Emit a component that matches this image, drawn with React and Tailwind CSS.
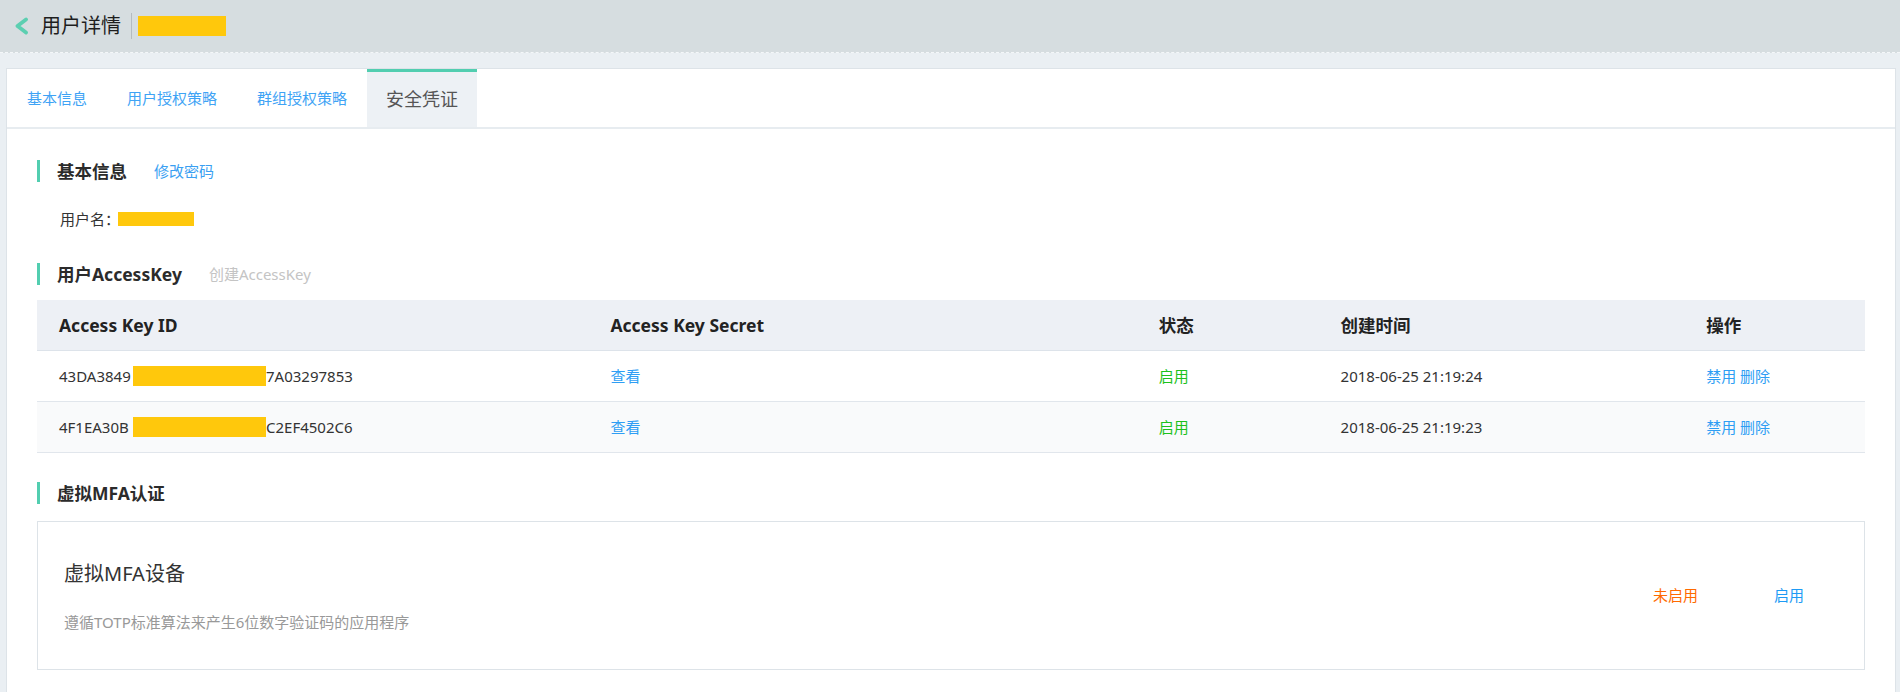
import React from "react";

function SectionTitle({ children, extra, extraClass }) {
  return (
    <div className="flex items-center h-[22px] border-l-[3px] border-[#52ceb0] pl-[17px]">
      <span className="text-[17.5px] font-bold text-[#2b2b2b] leading-[22px]">{children}</span>
      {extra && <span className={"ml-[27px] text-[15px] leading-[22px] " + extraClass}>{extra}</span>}
    </div>
  );
}

const rows = [
  { pre: "43DA3849", post: "7A03297853", time: "2018-06-25 21:19:24", bg: "bg-white" },
  { pre: "4F1EA30B", post: "C2EF4502C6", time: "2018-06-25 21:19:23", bg: "bg-[#f9fafb]" },
];

export default function App() {
  return (
    <div className="min-h-screen bg-[#eaeff3] font-['Noto_Sans','Noto_Sans_CJK_SC',sans-serif] text-[#333]">
      {/* header */}
      <div className="h-[53px] bg-[#d6dde0] border-b border-dashed border-[#f4f7f9] flex items-center pl-[14px]">
        <svg width="15" height="18" viewBox="0 0 15 18" className="shrink-0">
          <polyline points="12,2.5 3.5,9 12,15.5" fill="none" stroke="#5ccfb1" strokeWidth="3.8" strokeLinecap="round" strokeLinejoin="round" />
        </svg>
        <span className="ml-[12px] text-[20px] leading-[26px] text-[#1e1e1e]">用户详情</span>
        <span className="ml-[10px] w-px h-[26px] bg-[#b4bbc0]" />
        <span className="ml-[6px] w-[88px] h-[20px] bg-[#ffc80c]" />
      </div>

      <div className="pt-[15px] pl-[6px] pr-[4px]">
        <div className="bg-white border border-[#dde3e8] pb-[60px]">
          {/* tabs */}
          <div className="flex h-[60px] border-b-2 border-[#e7ecf0]">
            <div className="px-[20px] flex items-center text-[15px] text-[#3ea3f5]">基本信息</div>
            <div className="px-[20px] flex items-center text-[15px] text-[#3ea3f5]">用户授权策略</div>
            <div className="px-[20px] flex items-center text-[15px] text-[#3ea3f5]">群组授权策略</div>
            <div className="px-[19px] flex items-center text-[18px] text-[#555] bg-[#edf1f5] border-t-[3px] border-[#52ceb0]">安全凭证</div>
          </div>

          <div className="px-[30px] pt-[31px]">
            <SectionTitle extra="修改密码" extraClass="text-[#3a9ff2]">基本信息</SectionTitle>

            <div className="mt-[27px] pl-[23px] flex items-center h-[20px] text-[15px] text-[#333]">
              <span>用户名：</span>
              <span className="-ml-[2px] w-[76px] h-[14px] bg-[#ffc80c]" />
            </div>

            <div className="mt-[34px]">
              <SectionTitle extra="创建AccessKey" extraClass="text-[#c4c4c4]">用户AccessKey</SectionTitle>
            </div>

            {/* table */}
            <div className="mt-[15px]">
              <div className="grid grid-cols-[30%_30%_10%_20%_10%] h-[51px] items-center bg-[#edf0f5] border-b border-[#dde3ea] text-[17.5px] font-bold text-[#222]">
                <div className="pl-[22px]">Access Key ID</div>
                <div className="pl-[25px]">Access Key Secret</div>
                <div className="pl-[25px]">状态</div>
                <div className="pl-[24px]">创建时间</div>
                <div className="pl-[24px]">操作</div>
              </div>
              {rows.map((r, i) => (
                <div key={i} className={"grid grid-cols-[30%_30%_10%_20%_10%] h-[51px] items-center border-b border-[#e1e6ec] text-[15px] text-[#333] " + r.bg}>
                  <div className="pl-[22px] flex items-center">
                    <span className="w-[74px] whitespace-nowrap">{r.pre}</span>
                    <span className="w-[133px] h-[20px] bg-[#ffc80c]" />
                    <span>{r.post}</span>
                  </div>
                  <div className="pl-[25px] text-[#2e9ef4]">查看</div>
                  <div className="pl-[25px] text-[#1cc11c]">启用</div>
                  <div className="pl-[24px]">{r.time}</div>
                  <div className="pl-[24px] text-[#2e9ef4]">禁用 删除</div>
                </div>
              ))}
            </div>

            <div className="mt-[29px]">
              <SectionTitle>虚拟MFA认证</SectionTitle>
            </div>

            <div className="mt-[17px] h-[149px] border border-[#dde3e8] flex items-center">
              <div className="flex-1 pl-[26px] flex flex-col">
                <div className="text-[20px] leading-[28px] text-[#333]">虚拟MFA设备</div>
                <div className="mt-[24px] text-[15px] leading-[20px] text-[#999]">遵循TOTP标准算法来产生6位数字验证码的应用程序</div>
              </div>
              <div className="flex items-center">
                <span className="w-[121px] text-[15px] text-[#ff6a00]">未启用</span>
                <span className="w-[90px] text-[15px] text-[#1d9bf5]">启用</span>
              </div>
            </div>
          </div>
        </div>
      </div>
    </div>
  );
}
